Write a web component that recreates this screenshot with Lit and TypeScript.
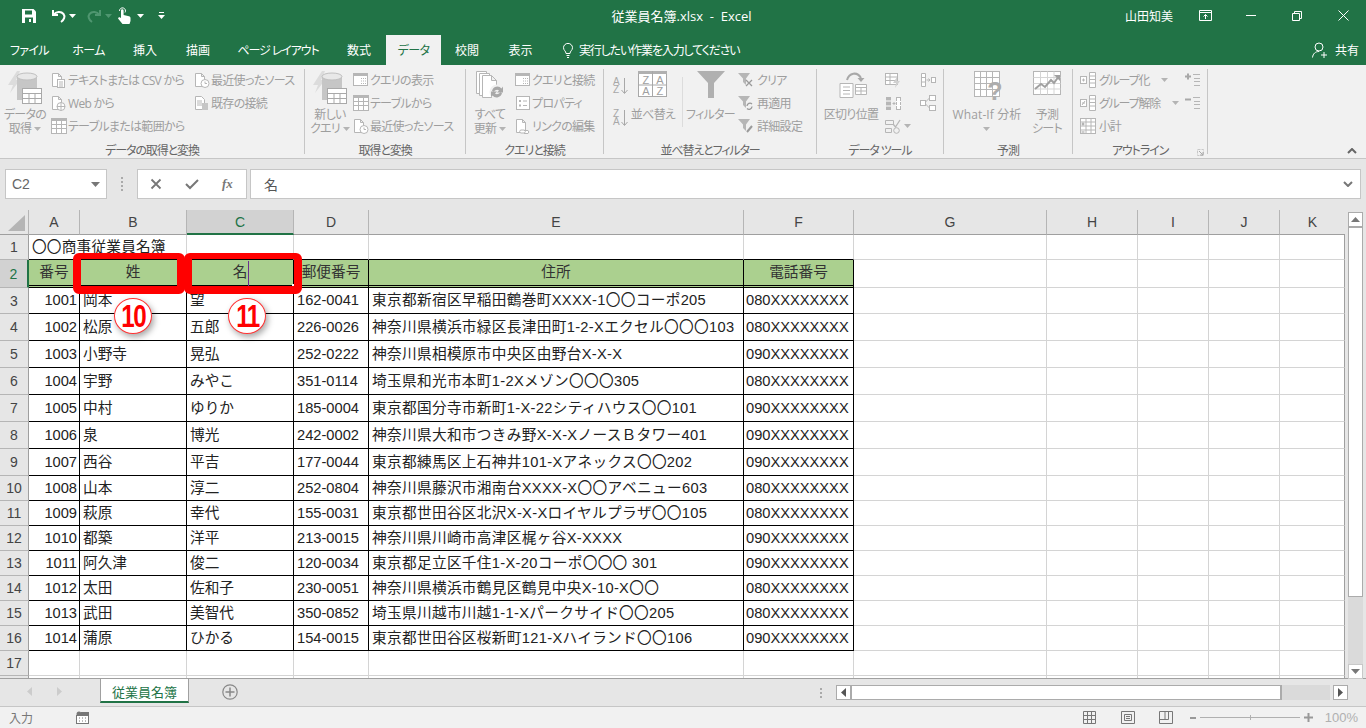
import { LitElement, html, svg, css } from "lit";
import { customElement } from "lit/decorators.js";

const C = "#b6b6b6";
const box = (w: number, h: number, body: unknown) =>
  html`<svg width=${w} height=${h} viewBox="0 0 ${w} ${h}" style="display:block;flex:none">${body}</svg>`;

const ic = {
  save: html`<svg width="16" height="16" viewBox="0 0 16 16" style="display:block"><path d="M1 1h11.500L15 3.500V15H1z" fill="#fff"/><rect x="4" y="2.500" width="7" height="4" fill="#217346"/><rect x="4" y="9.500" width="8" height="5.500" fill="#217346"/><rect x="8" y="11" width="2" height="3" fill="#fff"/></svg>`,
  undo: html`<svg width="16" height="14" viewBox="0 0 16 14" style="display:block"><path d="M2 1v5h5M2.500 6C5 2.500 10 2 12.500 5 14.500 7.500 13 11 10 13" fill="none" stroke="#fff" stroke-width="2"/></svg>`,
  redo: html`<svg width="16" height="14" viewBox="0 0 16 14" style="display:block"><path d="M14 1v5H9M13.500 6C11 2.500 6 2 3.500 5 1.500 7.500 3 11 6 13" fill="none" stroke="#4f9670" stroke-width="2"/></svg>`,
  hand: html`<svg width="14" height="17" viewBox="0 0 14 17" style="display:block"><path d="M2.500 4a3 3 0 1 1 5.500 1.500" fill="none" stroke="#fff"/><path d="M4 3.500a1.300 1.300 0 0 1 2.600 0V8l5.400 1.200c1 .3 1.500.9 1.500 1.800v3l-1 3H5.500L1 11.500l1-1.500 2 1z" fill="#fff"/></svg>`,
  caretW: html`<svg width="7" height="4" viewBox="0 0 7 4" style="display:block"><path d="M0 0h7L3.500 4z" fill="#fff"/></svg>`,
  caretD: html`<svg width="7" height="4" viewBox="0 0 7 4" style="display:block"><path d="M0 0h7L3.500 4z" fill="#4f9670"/></svg>`,
  custom: html`<svg width="7" height="7" viewBox="0 0 7 7" style="display:block"><path d="M1 .5h5" stroke="#fff"/><path d="M0 3h7L3.500 7z" fill="#fff"/></svg>`,
  ribbonDisp: html`<svg width="13" height="11" viewBox="0 0 13 11" style="display:block"><path d="M.5.500h12v10H.5zM.5 2.500h12M6.500 9V4.500M4.500 6.500l2-2 2 2" fill="none" stroke="#fff"/></svg>`,
  min: html`<svg width="10" height="1" viewBox="0 0 10 1" style="display:block"><path d="M0 .5h10" stroke="#fff"/></svg>`,
  restore: html`<svg width="10" height="10" viewBox="0 0 10 10" style="display:block"><path d="M.5 2.500h7v7h-7zM2.500 2.500v-2h7v7h-2" fill="none" stroke="#fff"/></svg>`,
  close: html`<svg width="11" height="11" viewBox="0 0 11 11" style="display:block"><path d="M.5.500l10 10M10.500.500l-10 10" stroke="#fff"/></svg>`,
  bulb: html`<svg width="10" height="15" viewBox="0 0 10 15" style="display:block"><path d="M3 10.500C3 8 .5 7.500.5 4.700a4.500 4.300 0 0 1 9 0C9.500 7.500 7 8 7 10.500zM3.500 12.500h3M4 14.500h2" fill="none" stroke="#fff"/></svg>`,
  share: html`<svg width="16" height="16" viewBox="0 0 16 16" style="display:block"><circle cx="7" cy="5" r="4" fill="none" stroke="#fff"/><path d="M.5 15.500C1 11.500 3.500 9.500 7 9.500" fill="none" stroke="#fff"/><path d="M12 10v6M9 13h6" stroke="#fff"/></svg>`,
  cr: html`<svg width="7" height="4" viewBox="0 0 7 4" style="display:block"><path d="M0 0h7L3.500 4z" fill="#b4b4b4"/></svg>`,
  down: html`<svg width="7" height="16" viewBox="0 0 7 16" style="display:block"><path d="M3.500 0v15M.5 12l3 3.500 3-3.500" fill="none" stroke="#a8a8a8"/></svg>`,
};

const page = svg`<path d="M2.500 1.500h6l3 3v10h-9zM8.500 1.500v3h3" fill="#fff" stroke=${C}/>`;
const tableGrid = (x: number, y: number, w: number, h: number) => svg`
  <rect x=${x + 0.5} y=${y + 0.5} width=${w} height=${h} fill="#fff" stroke=${C}/>
  <rect x=${x} y=${y} width=${w + 1} height="3" fill=${C}/>
  <path d="M${x + w / 3 + 0.5} ${y + 3}v${h - 3}M${x + (2 * w) / 3 + 0.5} ${y + 3}v${h - 3}M${x} ${y + 6.5}h${w}M${x} ${y + 10.5}h${w}" stroke=${C} fill="none"/>`;
const db = svg`
  <path d="M9 0L0 14h5L2 22 12 9H8l4-9z" fill="#dcdcdc"/>
  <rect x="9" y="5" width="20" height="24" fill="#c6c6c6"/>
  <ellipse cx="19" cy="5.500" rx="10" ry="3.500" fill="#e8e8e8" stroke="#c0c0c0"/>
  <rect x="14.500" y="17.500" width="19" height="15" fill="#fff" stroke="#a9a9a9"/>
  <path d="M14.500 22.500h19M14.500 27.500h19M21 22.500v10M27 22.500v10" stroke="#a9a9a9" fill="none"/>`;

const smallIcons: Record<string, unknown> = {
  textDoc: box(18, 16, svg`${page}<rect x="7.500" y="7.500" width="7" height="8" fill="#fff" stroke=${C}/><path d="M9 10h4M9 12h4M9 14h4" stroke=${C}/>`),
  web: box(18, 16, svg`${page}<circle cx="11" cy="11.500" r="4" fill="#fff" stroke=${C}/><path d="M7 11.500h8M11 7.500v8" stroke=${C}/>`),
  table: box(18, 16, tableGrid(1, 0, 15, 15)),
  recent: box(18, 16, svg`${page}<circle cx="12" cy="11.500" r="4" fill="#fff" stroke=${C}/><path d="M12 9.500v2h2" fill="none" stroke=${C}/>`),
  existing: box(18, 16, svg`<path d="M2.500 1.500h6l3 3v10h-9z" fill="#fff" stroke=${C}/><path d="M4 6h5M4 8h5M4 10h5" stroke=${C}/><rect x="9" y="8" width="6" height="7" fill="#c6c6c6"/>`),
  query: box(18, 16, svg`<rect x="1.500" y="1.500" width="14" height="12" fill="#fff" stroke=${C}/><rect x="1" y="1" width="15" height="3" fill=${C}/><path d="M9 6.500h5M9 9h5M9 11.500h5" stroke=${C} stroke-dasharray="1 1"/>`),
  props: box(18, 16, svg`<rect x="2.500" y="1.500" width="13" height="13" fill="#fff" stroke=${C}/><path d="M5 5h2v2H5zM5 9.500h2v2H5z" fill=${C}/><path d="M9 6h4M9 10.500h4" stroke=${C}/>`),
  link: box(18, 16, svg`${page}<path d="M6.500 12h4a2 2 0 0 1 0 3h-4a2 2 0 0 1 0-3zM10 12.500h4a2 2 0 0 1 0 3h-4" fill="#fff" stroke=${C}/>`),
  clear: box(16, 16, svg`<path d="M0 1h12L8 6.500V13L5 10V6.500z" fill=${C}/><path d="M8 8l6 6M14 8l-6 6" stroke="#9a9a9a" stroke-width="1.300"/>`),
  reapply: box(16, 16, svg`<path d="M0 1h12L8 6.500V13L5 10V6.500z" fill=${C}/><path d="M9 11a3 3 0 0 1 5-2M14 11.500a3 3 0 0 1-5 2" fill="none" stroke="#9a9a9a" stroke-width="1.300"/>`),
  advanced: box(16, 16, svg`<path d="M0 1h12L8 6.500V13L5 10V6.500z" fill=${C}/><path d="M9 14l5-6" stroke="#9a9a9a" stroke-width="2"/>`),
  flash: box(16, 15, svg`<rect x=".5" y=".5" width="12" height="11" fill="#fff" stroke=${C}/><path d="M1 4h11M1 7.500h11M5 1v10" stroke=${C}/><path d="M12 4l-4 6h3l-1 5 5-7h-3z" fill="#d0d0d0"/>`),
  dedupe: box(16, 15, svg`<rect x="1" y="1" width="5" height="13" fill=${C}/><rect x="11.500" y="1.500" width="4" height="12" fill="#fff" stroke=${C}/><path d="M1 5h5M1 10h5M11 5.500h5M11 9.500h5" stroke="#fff"/><path d="M7.500 7.500h3M9 6v3" stroke=${C}/>`),
  valid: box(16, 15, svg`<path d="M.5 1.500h8v4h-8zM.5 9.500h6v4h-6z" fill="none" stroke=${C}/><path d="M8 5l2.500 3L15 1" fill="none" stroke=${C} stroke-width="1.300"/><circle cx="11.500" cy="11.500" r="2.800" fill="none" stroke=${C}/>`),
  consol: box(16, 14, svg`<path d="M1.500.5h4v13h-4zM1.500 4.500h4M1.500 9h4" fill="#fff" stroke=${C}/><path d="M6.500 7h3M8.500 5.500L10 7 8.500 8.500" fill="none" stroke=${C}/><rect x="11.500" y="4.500" width="4" height="5" fill="#fff" stroke=${C}/>`),
  rel: box(16, 16, svg`<rect x=".5" y="5.500" width="5" height="5" fill="#fff" stroke=${C}/><rect x="9.500" y=".5" width="6" height="5" fill="#fff" stroke=${C}/><rect x="9.500" y="10.500" width="6" height="5" fill="#fff" stroke=${C}/><path d="M5.500 7L9.500 3M5.500 9l4 4" stroke=${C} fill="none"/>`),
  groupPlus: box(17, 16, svg`<rect x=".5" y="4.500" width="6" height="7" fill="#fff" stroke=${C}/><path d="M2 8h3M3.500 6.500v3" stroke=${C}/><path d="M9.500.5h6v15h-6zM9.500 4h6M9.500 7.500h6M9.500 11h6" fill="#fff" stroke=${C}/>`),
  groupMinus: box(17, 16, svg`<rect x=".5" y="4.500" width="6" height="7" fill="#fff" stroke=${C}/><path d="M2 8h3M2 10l3-4" stroke=${C}/><path d="M9.500.5h6v15h-6zM9.500 4h6M9.500 7.500h6M9.500 11h6" fill="#fff" stroke=${C}/>`),
  subtotal: box(17, 16, svg`<rect x=".5" y=".5" width="15" height="15" fill="#fff" stroke=${C}/><path d="M6 .5v15M11 .5v15M.5 4h15M.5 8h15M.5 12h15" stroke=${C}/><path d="M1.500 6h3M3 4.500v3M1.500 14h3" stroke="#9a9a9a"/>`),
  showDetail: box(15, 14, svg`<path d="M0 3.500h6M3 .5v6" stroke="#a8a8a8" stroke-width="2"/><path d="M8 1.500h7M9 5.500h6M9 8.500h6M9 12.500h6" stroke=${C}/>`),
  hideDetail: box(15, 14, svg`<path d="M0 3.500h6" stroke="#a8a8a8" stroke-width="2"/><path d="M8 1.500h7M9 5.500h6M9 8.500h6M9 12.500h6" stroke=${C}/>`),
};

const bigIcons: Record<string, unknown> = {
  getData: box(35, 34, db),
  newQuery: box(35, 34, db),
  refresh: box(30, 30, svg`
    <path d="M1.500 .5h10v22h-10z" fill="#fff" stroke=${C}/>
    <path d="M4.500 2.500h10v22h-10z" fill="#fff" stroke=${C}/>
    <path d="M7.500 4.500h9l5 5v17h-14zM16.500 4.500v5h5" fill="#fff" stroke=${C}/>
    <circle cx="22" cy="21" r="7.500" fill="#f1f1f1"/>
    <path d="M17 20a5.500 5.500 0 0 1 9.500-2.500l1.500-2v6h-6l2-2a3.500 3.500 0 0 0-5 1zM27 22a5.500 5.500 0 0 1-9.500 2.500l-1.500 2v-6h6l-2 2a3.500 3.500 0 0 0 5-1z" fill="#a8a8a8"/>`),
  sort: box(30, 26, svg`
    <rect x=".5" y=".5" width="28" height="25" fill="#fff" stroke="#a8a8a8"/>
    <rect x="0" y="0" width="29" height="3" fill="#b0b0b0"/><path d="M14.500 0v26M0 14h29" stroke="#a8a8a8"/>
    <g font-family="Liberation Sans,sans-serif" font-size="11" fill="#a0a0a0" text-anchor="middle"><text x="7.500" y="12.500">Z</text><text x="21.500" y="12.500">A</text><text x="7.500" y="24">A</text><text x="21.500" y="24">Z</text></g>`),
  filter: box(28, 27, svg`<path d="M0 0h28L17 12v15h-6V12z" fill="#b0b0b0"/>`),
  split: box(31, 27, svg`
    <path d="M4 12.500h13v14H4zM7 16h7M7 19.500h7M7 23h7" fill="#fff" stroke=${C}/>
    <path d="M19.500 13.500h11v10h-11zM19.500 16.500h11M25 16.500v7M19.500 20h11" fill="#fff" stroke=${C}/>
    <path d="M11 9C13 2 21 0 25 7" fill="none" stroke="#a8a8a8" stroke-width="2"/><path d="M21.500 7h7l-3.500 4z" fill="#a8a8a8"/>`),
  whatif: box(30, 36, svg`
    <rect x=".5" y=".5" width="25" height="25" fill="#fff" stroke=${C}/>
    <path d="M6.500 .5v25M12.500 .5v25M18.500 .5v25M.5 6.500h25M.5 12.500h25M.5 18.500h25" stroke=${C} fill="none"/>
    <text x="21" y="29" font-family="Liberation Sans,sans-serif" font-weight="700" font-size="25" fill="#adadad" text-anchor="middle">?</text>`),
  forecast: box(29, 25, svg`
    <rect x=".5" y=".5" width="27" height="23" fill="#fff" stroke=${C}/>
    <path d="M7.500.5v23M14.500.5v23M21 .5v23M.5 6.500h27M.5 12.500h27M.5 18h27" stroke="#d5d5d5" fill="none"/>
    <path d="M2 18l6-5 4 3 6-7 3 3 5-7" fill="none" stroke="#a0a0a0" stroke-width="2"/><path d="M21 4h6v6z" fill="#a0a0a0"/>`),
};

const sheetRows = [
  ["1001","岡本","望","162-0041","東京都新宿区早稲田鶴巻町XXXX-1〇〇コーポ205","080XXXXXXXX"],
  ["1002","松原","五郎","226-0026","神奈川県横浜市緑区長津田町1-2-Xエクセル〇〇〇103","080XXXXXXXX"],
  ["1003","小野寺","晃弘","252-0222","神奈川県相模原市中央区由野台X-X-X","090XXXXXXXX"],
  ["1004","宇野","みやこ","351-0114","埼玉県和光市本町1-2Xメゾン〇〇〇305","080XXXXXXXX"],
  ["1005","中村","ゆりか","185-0004","東京都国分寺市新町1-X-22シティハウス〇〇101","090XXXXXXXX"],
  ["1006","泉","博光","242-0002","神奈川県大和市つきみ野X-X-XノースＢタワー401","090XXXXXXXX"],
  ["1007","西谷","平吉","177-0044","東京都練馬区上石神井101-Xアネックス〇〇202","090XXXXXXXX"],
  ["1008","山本","淳二","252-0804","神奈川県藤沢市湘南台XXXX-X〇〇アベニュー603","080XXXXXXXX"],
  ["1009","萩原","幸代","155-0031","東京都世田谷区北沢X-X-Xロイヤルプラザ〇〇105","080XXXXXXXX"],
  ["1010","都築","洋平","213-0015","神奈川県川崎市高津区梶ヶ谷X-XXXX","090XXXXXXXX"],
  ["1011","阿久津","俊二","120-0034","東京都足立区千住1-X-20コーポ〇〇〇 301","090XXXXXXXX"],
  ["1012","太田","佐和子","230-0051","神奈川県横浜市鶴見区鶴見中央X-10-X〇〇","080XXXXXXXX"],
  ["1013","武田","美智代","350-0852","埼玉県川越市川越1-1-Xパークサイド〇〇205","080XXXXXXXX"],
  ["1014","蒲原","ひかる","154-0015","東京都世田谷区桜新町121-Xハイランド〇〇106","090XXXXXXXX"],
];
const headers = ["番号","姓","名","郵便番号","住所","電話番号"];
const tabs: [string, number][] = [["ファイル",59],["ホーム",59],["挿入",54],["描画",52],["ページ レイアウト",108],["数式",54],["データ",55],["校閲",52],["表示",55]];
const colNames = ["A","B","C","D","E","F","G","H","I","J","K"];

@customElement("app-root")
export class AppRoot extends LitElement {
  static styles = css`
    :host { display:block; width:1366px; height:728px; overflow:hidden; background:#e6e6e6;
      font-family:"Open Sans","Noto Sans CJK JP",sans-serif; font-size:12px; color:#444; }
    * { box-sizing:border-box; }
    .title { height:35px; background:#217346; color:#fff; display:flex; align-items:center; padding-bottom:4px; }
    .qat { display:flex; align-items:center; width:520px; padding-left:21px; flex:none; }
    .q { flex:none; }
    .doc { flex:1; text-align:center; font-size:13px; padding-right:282px; white-space:pre; }
    .user { width:57px; font-size:12px; flex:none; }
    .ctl { width:46px; display:flex; justify-content:center; flex:none; }
    .tabs { height:30px; background:#217346; color:#fff; display:flex; align-items:stretch; font-size:12px; font-feature-settings:"palt"; }
    .tab { display:flex; align-items:center; justify-content:center; padding-bottom:1px; white-space:nowrap; }
    .tab.kana { letter-spacing:-.6px; }
    .tab.long { letter-spacing:-1.1px; }
    .tab.on { background:#f1f1f1; color:#217346; }
    .tell { display:flex; align-items:center; gap:6px; margin-left:15px; flex:1; letter-spacing:-1.15px; }
    .sharebtn { display:flex; align-items:center; gap:7px; padding-right:7px; font-size:12px; }
    .ribbon { height:94px; background:#f1f1f1; border-bottom:1px solid #c6c6c6; display:flex; color:#9e9e9e; font-feature-settings:"palt"; padding-top:4px; letter-spacing:-.7px; }
    .grp { position:relative; height:85px; display:flex; flex-direction:column; border-right:1px solid #c6c6c6; flex:none; }
    .grp.end { border:none; flex:1; }
    .body { display:flex; height:70px; flex:none; }
    .lbl { height:15px; flex:none; display:flex; align-items:center; justify-content:center; color:#666; font-size:12px; white-space:nowrap; margin-top:3px; letter-spacing:-1.1px; }
    .big { display:flex; flex-direction:column; align-items:center; flex:none; }
    .big .i { height:39px; padding-top:2px; display:flex; align-items:flex-start; justify-content:center; }
    .big .t { line-height:14px; text-align:center; white-space:nowrap; display:flex; flex-direction:column; align-items:center; }
    .big .t span { display:flex; align-items:center; gap:3px; min-height:14px; }
    .big.sortb { margin-right:4px; }
    .big.wi { letter-spacing:.1px; }
    .big.wi .i { padding-left:4px; }
    .col { display:flex; flex-direction:column; flex:none; }
    .col.azc { width:24px; padding:1px 0 0 9px; }
    .col.out { width:112px; padding-left:7px; letter-spacing:-1.2px; }
    .it { height:23px; display:flex; align-items:center; white-space:nowrap; padding-bottom:1px; }
    .vsep { width:1px; height:50px; background:#dcdcdc; margin-top:8px; flex:none; }
    .launcher { position:absolute; right:3px; bottom:-2px; }
    .collapse { position:absolute; right:9px; bottom:0; }
    .az { display:flex; align-items:center; gap:1px; height:32px; color:#a8a8a8; letter-spacing:0; }
    .az span { display:block; font:10px/8px "Liberation Sans",sans-serif; }
    .az i { font-style:normal; display:block; width:7px; }
    .fbar { height:51px; background:#e6e6e6; display:flex; padding:10px 0 11px 5px; align-items:stretch; }
    .fb { background:#fff; border:1px solid #c6c6c6; display:flex; align-items:center; font-family:"Liberation Sans","Noto Sans CJK JP",sans-serif; }
    .name { width:102px; padding:0 6px; justify-content:space-between; font-size:14px; color:#666; }
    .dots { width:30px; display:flex; flex-direction:column; align-items:center; justify-content:center; gap:2px; }
    .dots i { width:2px; height:2px; background:#aaa; display:block; }
    .fx { width:110px; gap:23px; padding:0 0 0 12px; color:#777; }
    .input { width:1111px; margin-left:3px; padding:0 7px 0 13px; justify-content:space-between; font-size:14px; color:#555; }
    .fxt { font:italic 700 13px "Liberation Serif",serif; color:#777; }
    .sheet { position:relative; display:flex; height:468px; font-family:"Liberation Sans","Noto Sans CJK JP",sans-serif; font-size:14.67px; }
    .grid { display:grid; width:1345px; height:468px; overflow:hidden; background:#fff; flex:none;
      grid-template-columns:29px 51px 107px 107px 75px 375px 110px 193px 91px 71px 71px 65px;
      grid-template-rows:25px 25px 28px 26px repeat(6,27px) repeat(8,25px) 25px; }
    .c { border-right:1px solid #d4d4d4; border-bottom:1px solid #d4d4d4; display:flex; align-items:center; padding:0 2px 0 3px; white-space:nowrap; color:#222; overflow:visible; min-width:0; line-height:1; }
    .c.k { border-right-color:#9f9f9f; }
    .c.t { border-right-color:#000; border-bottom-color:#000; }
    .c.u { border-bottom-color:#000; }
    .c.r { justify-content:flex-end; }
    .c.e { letter-spacing:.32px; }
    .c.f { padding-left:2px; }
    .c.h { background:#abd08f; justify-content:center; color:#333; border-right-color:#000; border-bottom:3px double #000; padding:0 0 1px; }
    .c.s2 { grid-column:span 2; letter-spacing:.2px; }
    .ch { background:#e6e6e6; border-right:1px solid #b5b5b5; border-bottom:1px solid #9f9f9f; display:flex; align-items:center; justify-content:center; color:#444; font-size:14px; }
    .ch.on { background:#d2d2d2; border-bottom:2px solid #217346; color:#217346; }
    .ch.end { border-right:none; }
    .rh { background:#e6e6e6; border-right:1px solid #9f9f9f; border-bottom:1px solid #b5b5b5; display:flex; align-items:center; justify-content:center; color:#444; font-size:14px; }
    .rh.on { background:#d2d2d2; border-right:2px solid #217346; color:#217346; }
    .corner { background:#e6e6e6; border-right:1px solid #b5b5b5; border-bottom:1px solid #9f9f9f; display:flex; align-items:flex-end; justify-content:flex-end; padding:0 3px 3px 0; }
    .caret { position:absolute; left:248px; top:51px; width:1px; height:25px; background:#6a2d8f; }
    .handle { position:absolute; left:292px; top:74px; width:3px; height:3px; background:#fff; }
    .vs { width:21px; height:468px; padding:2px 3px 0; display:flex; flex-direction:column; }
    .sb { background:#fff; border:1px solid #ababab; flex:none; display:flex; align-items:center; justify-content:center; }
    .vs .up { height:15px; } .vs .thumb { height:370px; } .vs .trk { height:67px; background:#dadada; flex:none; } .vs .dn { height:15px; border-color:#c8c8c8; }
    .box { position:absolute; border-style:solid; border-color:#f00; border-width:6px 8px 8px; border-radius:6px; height:41px; top:43px; }
    .b1 { left:73px; width:112px; } .b2 { left:184px; width:118px; }
    .num { position:absolute; top:88px; width:38px; height:36px; border-radius:50%; background:#fff; border:1.5px solid #f33; color:#f00;
      box-shadow:2px 3px 6px rgba(0,0,0,.35); display:flex; align-items:center; justify-content:center; }
    .num span { display:block; font:700 31px/1 "Liberation Sans",sans-serif; letter-spacing:-2px; transform:scaleX(.78); }
    .n1 { left:114px; } .n2 { left:228px; }
    .tabbar { height:28px; display:flex; background:#e6e6e6; align-items:flex-start; border-top:1px solid #a0a0a0; }
    .nav { width:100px; height:25px; display:flex; align-items:center; padding-left:27px; gap:25px; }
    .stab { width:89px; height:25px; margin-top:-1px; background:#fff; border:1px solid #a0a0a0; border-bottom:2px solid #217346; color:#217346; display:flex; align-items:center; justify-content:center; font:13px "Noto Sans CJK JP",sans-serif; padding-top:2px; }
    .add { margin-left:33px; margin-top:5px; }
    .hgap { width:599px; display:flex; justify-content:flex-end; padding:9px 15px 0 0; }
    .hgap div { display:flex; flex-direction:column; gap:2px; }
    .hgap i { width:2px; height:2px; background:#aaa; display:block; }
    .hs { display:flex; margin-top:6px; height:15px; margin-left:-1px; }
    .hs .l { width:15px; } .hs .th { width:431px; border:1px solid #ababab; border-right-width:2px; height:15px; background:#fff; }
    .hs .tr { width:48px; background:#dadada; margin-right:3px; } .hs .rb { width:15px; }
    .status { height:22px; background:#f1f1f1; border-top:1px solid #c6c6c6; display:flex; align-items:center; padding-left:9px; color:#777; font-feature-settings:"palt"; }
    .status .m { width:67px; }
    .views { margin-left:auto; display:flex; align-items:center; gap:24px; }
    .zoomc { display:flex; align-items:center; gap:4px; margin-left:-7px; }
    .slider { width:100px; height:1px; background:#b0b0b0; position:relative; }
    .slider i { position:absolute; left:50px; top:-2px; width:1px; height:5px; background:#b0b0b0; display:block; }
    .pct { color:#b0b0b0; font-size:13px; font-family:"Liberation Sans",sans-serif; margin:0 8px 0 -12px; }
  `;

  private item(icon: string, text: string) {
    return html`<div class="it">${smallIcons[icon]}<span>${text}</span></div>`;
  }
  private big(icon: string, lines: unknown[], w: number, cls = "") {
    return html`<div class="big ${cls}" style="width:${w}px"><div class="i">${bigIcons[icon]}</div><div class="t">${lines.map((l) => html`<span>${l}</span>`)}</div></div>`;
  }
  private group(w: number, label: string, body: unknown, extra: unknown = "") {
    return html`<section class="grp" style="width:${w}px"><div class="body">${body}</div><div class="lbl">${label}</div>${extra}</section>`;
  }

  private renderRibbon() {
    return html`<div class="ribbon">
      ${this.group(305, "データの取得と変換", html`
        ${this.big("getData", ["データの", html`取得 ${ic.cr}`], 50)}
        <div class="col" style="width:143px">${this.item("textDoc","テキストまたは CSV から")}${this.item("web","Web から")}${this.item("table","テーブルまたは範囲から")}</div>
        <div class="col">${this.item("recent","最近使ったソース")}${this.item("existing","既存の接続")}</div>`)}
      ${this.group(161, "取得と変換", html`
        <div style="width:3px"></div>
        ${this.big("newQuery", ["新しい", html`クエリ ${ic.cr}`], 44)}
        <div class="col">${this.item("query","クエリの表示")}${this.item("table","テーブルから")}${this.item("recent","最近使ったソース")}</div>`)}
      ${this.group(138, "クエリと接続", html`
        ${this.big("refresh", ["すべて", html`更新 ${ic.cr}`], 48)}
        <div class="col">${this.item("query","クエリと接続")}${this.item("props","プロパティ")}${this.item("link","リンクの編集")}</div>`)}
      ${this.group(213, "並べ替えとフィルター", html`
        <div class="col azc">
          <div class="az"><span><i>A</i><i>Z</i></span>${ic.down}</div>
          <div class="az"><span><i>Z</i><i>A</i></span>${ic.down}</div>
        </div>
        ${this.big("sort", ["並べ替え"], 50, "sortb")}
        <div class="vsep"></div>
        ${this.big("filter", ["フィルター"], 55)}
        <div class="col">
          <div class="it" style="gap:3px">${smallIcons.clear}<span>クリア</span></div>
          <div class="it" style="gap:3px">${smallIcons.reapply}<span>再適用</span></div>
          <div class="it" style="gap:3px">${smallIcons.advanced}<span>詳細設定</span></div>
        </div>`)}
      ${this.group(127, "データ ツール", html`
        ${this.big("split", ["区切り位置"], 68)}
        <div class="col" style="width:35px">
          <div class="it">${smallIcons.flash}</div><div class="it">${smallIcons.dedupe}</div>
          <div class="it" style="gap:3px">${smallIcons.valid}${ic.cr}</div>
        </div>
        <div class="col"><div class="it">${smallIcons.consol}</div><div class="it">${smallIcons.rel}</div></div>`)}
      ${this.group(129, "予測", html`
        ${this.big("whatif", ["What-If 分析", ic.cr], 86, "wi")}
        ${this.big("forecast", ["予測", "シート"], 34)}`)}
      ${this.group(135, "アウトライン", html`
        <div class="col out">
          <div class="it" style="gap:2px">${smallIcons.groupPlus}<span>グループ化</span><span style="margin-left:10px">${ic.cr}</span></div>
          <div class="it" style="gap:2px">${smallIcons.groupMinus}<span>グループ解除</span><span style="margin-left:10px">${ic.cr}</span></div>
          <div class="it" style="gap:2px">${smallIcons.subtotal}<span>小計</span></div>
        </div>
        <div class="col"><div class="it">${smallIcons.showDetail}</div><div class="it">${smallIcons.hideDetail}</div></div>`,
        html`<div class="launcher">${box(7, 7, svg`<path d="M.5.5h6v6h-6z" fill="none" stroke="#c8c8c8" stroke-dasharray="3 1"/><path d="M2 2l4 4M6 3v3H3" fill="none" stroke="#aaa"/>`)}</div>`)}
      <section class="grp end"><div class="collapse">${box(10, 6, svg`<path d="M1 5l4-4 4 4" fill="none" stroke="#666" stroke-width="2"/>`)}</div></section>
    </div>`;
  }

  private renderSheet() {
    const corner = html`<div class="corner">${box(17, 16, svg`<path d="M17 0v16H0z" fill="#b5b5b5"/>`)}</div>`;
    const hdr = colNames.map((n, i) => html`<div class="ch ${i === 2 ? "on" : ""} ${i === 10 ? "end" : ""}">${n}</div>`);
    const blank = () => colNames.slice(6).map((_, i) => html`<div class="c ${i === 4 ? "k" : ""}"></div>`);
    const r1 = html`<div class="rh">1</div><div class="c u s2">〇〇商事従業員名簿</div>
      ${[2, 3, 4, 5].map(() => html`<div class="c u"></div>`)}${blank()}`;
    const r2 = html`<div class="rh on">2</div>${headers.map((h) => html`<div class="c h">${h}</div>`)}${blank()}`;
    const cellCls = ["r", "", "", "", "e", "f"];
    const rows = sheetRows.map((r, i) => html`<div class="rh">${i + 3}</div>
      ${r.map((v, j) => html`<div class="c t ${cellCls[j]}">${v}</div>`)}${blank()}`);
    const extra = ["17", ""].map((n) => html`<div class="rh">${n}</div>${[0,1,2,3,4,5].map(() => html`<div class="c"></div>`)}${blank()}`);
    return html`<div class="sheet">
      <div class="grid">${corner}${hdr}${r1}${r2}${rows}${extra}</div>
      <div class="vs">
        <div class="sb up">${box(9, 5, svg`<path d="M0 5L4.500 0 9 5z" fill="#777"/>`)}</div>
        <div class="sb thumb"></div><div class="trk"></div>
        <div class="sb dn">${box(9, 5, svg`<path d="M0 0h9L4.500 5z" fill="#777"/>`)}</div>
      </div>
      <div class="caret"></div><div class="handle"></div>
      <div class="box b1"></div><div class="box b2"></div>
      <div class="num n1"><span>10</span></div><div class="num n2"><span>11</span></div>
    </div>`;
  }

  render() {
    return html`
      <div class="title">
        <div class="qat">
          <div class="q" style="width:30px">${ic.save}</div>
          <div class="q" style="width:18px">${ic.undo}</div><div class="q" style="width:17px">${ic.caretW}</div>
          <div class="q" style="width:19px">${ic.redo}</div><div class="q" style="width:12px">${ic.caretD}</div>
          <div class="q" style="width:20px">${ic.hand}</div><div class="q" style="width:21px">${ic.caretW}</div>
          <div class="q">${ic.custom}</div>
        </div>
        <div class="doc">従業員名簿.xlsx  -  Excel</div>
        <div class="user">山田知美</div>
        <div class="ctl">${ic.ribbonDisp}</div><div class="ctl">${ic.min}</div><div class="ctl">${ic.restore}</div><div class="ctl">${ic.close}</div>
      </div>
      <div class="tabs">
        ${tabs.map(([t, w]) => html`<div class="tab ${t === "データ" ? "on" : ""} ${/[ァ-ヶ]/.test(t) ? "kana" : ""} ${t.length > 5 ? "long" : ""}" style="width:${w}px">${t}</div>`)}
        <div class="tell">${ic.bulb}<span>実行したい作業を入力してください</span></div>
        <div class="sharebtn">${ic.share}<span>共有</span></div>
      </div>
      ${this.renderRibbon()}
      <div class="fbar">
        <div class="fb name"><span>C2</span>${box(9, 5, svg`<path d="M0 0h9L4.500 5z" fill="#777"/>`)}</div>
        <div class="dots"><i></i><i></i><i></i><i></i></div>
        <div class="fb fx">
          ${box(12, 12, svg`<path d="M1.500 1.500l9 9M10.500 1.500l-9 9" stroke="#777" stroke-width="1.800"/>`)}
          ${box(14, 12, svg`<path d="M1 6l4 4 8-8" fill="none" stroke="#777" stroke-width="2"/>`)}
          <span class="fxt">fx</span>
        </div>
        <div class="fb input"><span>名</span>${box(10, 6, svg`<path d="M1 1l4 4 4-4" fill="none" stroke="#777" stroke-width="2"/>`)}</div>
      </div>
      ${this.renderSheet()}
      <div class="tabbar">
        <div class="nav">${box(5, 9, svg`<path d="M5 0v9L0 4.500z" fill="#ccc"/>`)}${box(5, 9, svg`<path d="M0 0v9l5-4.500z" fill="#ccc"/>`)}</div>
        <div class="stab">従業員名簿</div>
        <div class="add">${box(16, 16, svg`<circle cx="8" cy="8" r="7.200" fill="none" stroke="#888" stroke-width="1.200"/><path d="M8 3.500v9M3.500 8h9" stroke="#888" stroke-width="1.500"/>`)}</div>
        <div class="hgap"><div><i></i><i></i><i></i></div></div>
        <div class="hs">
          <div class="sb l">${box(5, 9, svg`<path d="M5 0v9L0 4.500z" fill="#555"/>`)}</div>
          <div class="th"></div><div class="tr"></div>
          <div class="sb rb">${box(5, 9, svg`<path d="M0 0v9l5-4.500z" fill="#555"/>`)}</div>
        </div>
      </div>
      <div class="status">
        <div class="m">入力</div>
        ${box(13, 13, svg`<circle cx="3" cy="3" r="2.500" fill="#777"/><rect x="5" y="1" width="8" height="3" fill="#777"/><rect x=".5" y="4.500" width="12" height="8" fill="#fff" stroke="#777"/><path d="M3 7h1M6 7h1M9 7h1M3 10h1M6 10h1M9 10h1" stroke="#777"/>`)}
        <div class="views">
          ${box(14, 13, svg`<path d="M.5.500h12v12H.5zM4.500.5v12M8.500.5v12M.5 4.500h12M.5 8.500h12" fill="none" stroke="#777"/>`)}
          ${box(14, 13, svg`<path d="M.5.500h13v12H.5z" fill="none" stroke="#777"/><path d="M3.500 3.500h7v6h-7zM5 5.500h4M5 7.500h4" fill="none" stroke="#777"/>`)}
          ${box(14, 13, svg`<path d="M.5.500h13v12H.5zM.5 8.500h9v-8M6 .5v8" fill="none" stroke="#777"/>`)}
          <div class="zoomc">
            ${box(6, 2, svg`<path d="M0 1h6" stroke="#999" stroke-width="2"/>`)}
            <div class="slider"><i></i></div>
            ${box(9, 9, svg`<path d="M0 4.500h9M4.500 0v9" stroke="#999" stroke-width="2"/>`)}
          </div>
          <div class="pct">100%</div>
        </div>
      </div>`;
  }
}
